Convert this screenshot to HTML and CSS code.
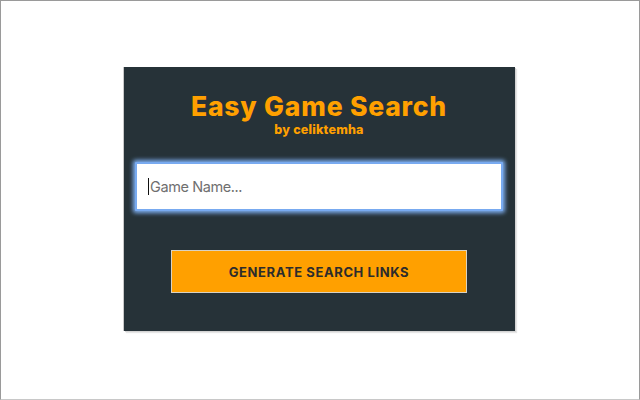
FILE: index.html
```html
<!DOCTYPE html>
<html>
<head>
<meta charset="utf-8">
<link rel="stylesheet" href="styles.css">
</head>
<body>
<div class="frame">
  <div class="panel">
    <h1 class="title">Easy Game Search</h1>
    <div class="byline">by celiktemha</div>
    <div class="field">
      <span class="caret"></span>
      <input class="search" type="text" placeholder="Game Name...">
    </div>
    <button class="generate">GENERATE SEARCH LINKS</button>
  </div>
</div>
</body>
</html>
```
FILE: styles.css
```css
html, body {
  margin: 0;
  padding: 0;
  background: #ffffff;
}
.frame {
  box-sizing: border-box;
  width: 640px;
  height: 400px;
  border: 1px solid #9a9a9a;
  border-bottom-color: #c8c8c8;
  display: flex;
  align-items: flex-start;
  justify-content: center;
  padding-top: 66px;
}
.panel {
  box-sizing: border-box;
  width: 391px;
  height: 264px;
  margin-left: -1px;
  background: #263238;
  box-shadow: 1px 1px 0 #d4d4d4, 2px 2px 1px #e6e6e6, -1px 0 0 #c9c9c9;
  padding: 24px 12px 0 11px;
  display: flex;
  flex-direction: column;
  align-items: center;
  font-family: Inter, "Liberation Sans", sans-serif;
}
.title {
  margin: 0;
  font-size: 26.5px;
  line-height: 30px;
  font-weight: 800;
  color: #ffa000;
  letter-spacing: 0.8px;
}
.byline {
  margin-top: 2px;
  font-size: 12.5px;
  line-height: 14px;
  font-weight: 800;
  color: #ffa000;
  letter-spacing: 0.2px;
}
.field {
  position: relative;
  margin-top: 25px;
  align-self: stretch;
}
.search {
  box-sizing: border-box;
  display: block;
  width: 100%;
  height: 49px;
  margin: 0;
  border: 2px solid #78aaf0;
  border-radius: 1px;
  box-shadow: 0 0 4px 2px #7fb0f2;
  outline: none;
  background: #ffffff;
  padding: 0 10px 0 13px;
  font-family: Inter, "Liberation Sans", sans-serif;
  font-size: 14.5px;
  letter-spacing: -0.4px;
  color: #333;
}
.search::placeholder {
  color: #6f6f6f;
}
.caret {
  position: absolute;
  left: 13px;
  top: 16px;
  width: 1px;
  height: 17px;
  background: #111;
}
.generate {
  box-sizing: border-box;
  margin-top: 39px;
  width: 296px;
  height: 43px;
  background: #ffa000;
  border: 1px solid #d9d2c2;
  border-radius: 0;
  font-family: Inter, "Liberation Sans", sans-serif;
  font-size: 13px;
  font-weight: 700;
  letter-spacing: 0.6px;
  color: #2c2c2c;
  padding: 0;
}
```
